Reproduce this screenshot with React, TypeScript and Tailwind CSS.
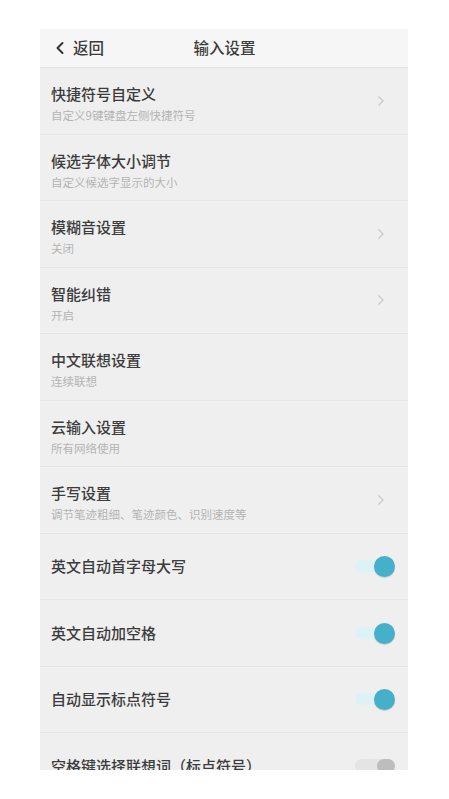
import { ChevronLeft } from "lucide-react"

type Row = {
  title: string
  sub?: string
  arrow?: boolean
  toggle?: "on" | "off"
}

const rows: Row[] = [
  { title: "快捷符号自定义", sub: "自定义9键键盘左侧快捷符号", arrow: true },
  { title: "候选字体大小调节", sub: "自定义候选字显示的大小" },
  { title: "模糊音设置", sub: "关闭", arrow: true },
  { title: "智能纠错", sub: "开启", arrow: true },
  { title: "中文联想设置", sub: "连续联想" },
  { title: "云输入设置", sub: "所有网络使用" },
  { title: "手写设置", sub: "调节笔迹粗细、笔迹颜色、识别速度等", arrow: true },
  { title: "英文自动首字母大写", toggle: "on" },
  { title: "英文自动加空格", toggle: "on" },
  { title: "自动显示标点符号", toggle: "on" },
  { title: "空格键选择联想词（标点符号）", toggle: "off" },
]

const Chevron = () => (
  <svg width="8" height="12" viewBox="0 0 8 12" fill="none">
    <path d="M1.5 1.5L6 6l-4.5 4.5" stroke="#c9c9c9" strokeWidth="1.3" />
  </svg>
)

function Toggle({ on }: { on: boolean }) {
  if (on)
    return (
      <div className="relative w-[40px] h-[22px] flex items-center">
        <div className="w-[32px] h-[12px] rounded-full bg-[#ddf2f6]" />
        <div className="absolute right-0 top-[1px] w-[21px] h-[21px] rounded-full bg-[#46afca] shadow-[0_1px_1px_rgba(0,0,0,0.15)]" />
      </div>
    )
  return (
    <div className="relative w-[40px] h-[22px] flex items-center">
      <div className="w-[38px] h-[14px] rounded-full bg-[#e4e4e4]" />
      <div className="absolute right-0 top-[4px] w-[18px] h-[14px] rounded-full bg-[#bdbdbd]" />
    </div>
  )
}

function SettingRow({ row }: { row: Row }) {
  return (
    <div className="h-[66.5px] shrink-0 border-b border-[#e5e5e5] flex items-center pl-[11px] pr-[13px]">
      <div className={`flex-1 flex flex-col self-stretch ${row.sub ? "pt-[17px]" : "justify-center"}`}>
        <span className="text-[15px] leading-[18px] font-medium text-[#3c3c3c]">{row.title}</span>
        {row.sub && (
          <span className="mt-[5px] text-[11.5px] leading-[14px] text-[#b4b4b4]">{row.sub}</span>
        )}
      </div>
      {row.arrow && (
        <div className="pr-[10px]">
          <Chevron />
        </div>
      )}
      {row.toggle && <Toggle on={row.toggle === "on"} />}
    </div>
  )
}

export default function App() {
  return (
    <div
      className="min-h-screen bg-white pt-[29px] pl-[40px]"
      style={{ fontFamily: '"Noto Sans CJK SC", "Noto Sans", sans-serif' }}
    >
      <div className="w-[368px] h-[741px] overflow-hidden bg-[#efefef] flex flex-col">
        <div className="h-[39px] shrink-0 bg-[#f6f6f6] border-b border-[#e2e2e2] relative flex items-center pl-[10px]">
          <ChevronLeft size={20} strokeWidth={2.4} className="text-[#333]" />
          <span className="ml-[3px] text-[15.5px] font-medium text-[#3c3c3c]">返回</span>
          <span className="absolute left-0 right-0 text-center text-[15.5px] font-medium text-[#3c3c3c] pointer-events-none pl-[1px]">
            输入设置
          </span>
        </div>
        {rows.map((r) => (
          <SettingRow key={r.title} row={r} />
        ))}
      </div>
    </div>
  )
}
